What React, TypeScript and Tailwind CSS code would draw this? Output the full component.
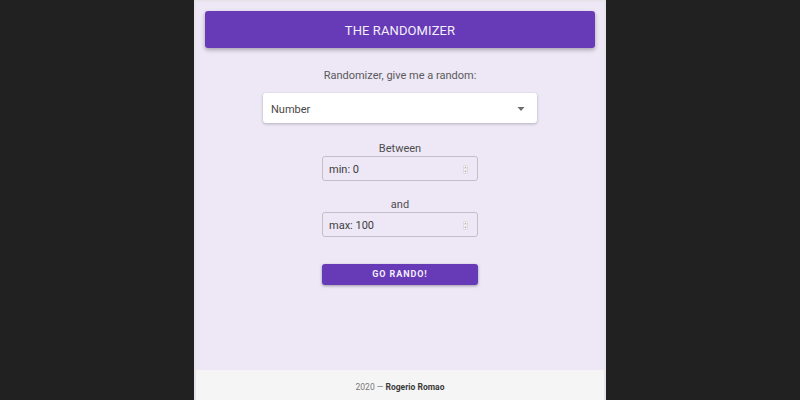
import React from "react";

function Spinner() {
  return (
    <svg width="5" height="9" viewBox="0 0 5 9" className="shrink-0">
      <rect x="0.5" y="0.5" width="4" height="8" rx="1" fill="#f3f3f3" stroke="#d0d0d0" strokeWidth="0.6" />
      <path d="M1.3 3.2 L2.5 1.8 L3.7 3.2 Z" fill="#9e9e9e" />
      <path d="M1.3 5.8 L2.5 7.2 L3.7 5.8 Z" fill="#9e9e9e" />
    </svg>
  );
}

export default function App() {
  return (
    <div
      className="w-[800px] h-[400px] bg-[#212121] flex justify-center overflow-hidden"
      style={{ fontFamily: "Roboto, 'Liberation Sans', sans-serif" }}
    >
      <div className="w-[412px] h-[400px] border-2 border-[#e6e3ea] border-b-0 flex flex-col bg-[#ede7f6]">
        <div className="flex-1 flex flex-col items-center">
          <div className="mt-[9px] mx-[9px] self-stretch h-[37px] shrink-0 bg-[#673ab7] rounded-[3px] shadow-[0_2px_4px_rgba(0,0,0,0.3)] flex items-center justify-center pt-[3px] text-[#f3effa] text-[13px] tracking-[0.1px]">
            THE RANDOMIZER
          </div>
          <div className="mt-[21px] h-[14px] text-[11px] text-[#5a5a5a] leading-[14px]">
            Randomizer, give me a random:
          </div>
          <div className="mt-[10px] w-[274px] h-[30px] shrink-0 bg-white rounded-[3px] shadow-[0_1px_3px_rgba(0,0,0,0.25)] flex items-center justify-between pl-[8px] pr-[12px] pt-[3px]">
            <span className="text-[11px] leading-[14px] text-[#484848]">Number</span>
            <svg width="8" height="4" viewBox="0 0 8 4" className="-mt-[2px]">
              <path d="M0.5 0 L7.5 0 L4 4 Z" fill="#6b6b6b" />
            </svg>
          </div>
          <div className="mt-[19px] h-[14px] text-[11px] text-[#4e4e4e] leading-[14px]">Between</div>
          <div className="w-[156px] h-[25px] shrink-0 border border-[#c2bec8] rounded-[3px] flex items-center justify-between pl-[6px] pr-[9px] pt-[2px]">
            <span className="text-[11px] leading-[14px] text-[#3d3d3d]">min: 0</span>
            <Spinner />
          </div>
          <div className="mt-[17px] h-[14px] text-[11px] text-[#4e4e4e] leading-[14px]">and</div>
          <div className="w-[156px] h-[25px] shrink-0 border border-[#c2bec8] rounded-[3px] flex items-center justify-between pl-[6px] pr-[9px] pt-[2px]">
            <span className="text-[11px] leading-[14px] text-[#3d3d3d]">max: 100</span>
            <Spinner />
          </div>
          <div className="mt-[27px] w-[156px] h-[21px] shrink-0 bg-[#673ab7] rounded-[3px] shadow-[0_1px_3px_rgba(0,0,0,0.35)] flex items-center justify-center text-[#f3effa] text-[9px] font-bold tracking-[0.9px]">
            GO RANDO!
          </div>
        </div>
        <div className="h-[30px] shrink-0 bg-[#f5f5f5] flex items-center justify-center text-[8.5px] pt-[4px]">
          <span className="text-[#777]">2020 —&nbsp;</span>
          <span className="text-[#3a3a3a] font-bold">Rogerio Romao</span>
        </div>
      </div>
    </div>
  );
}
